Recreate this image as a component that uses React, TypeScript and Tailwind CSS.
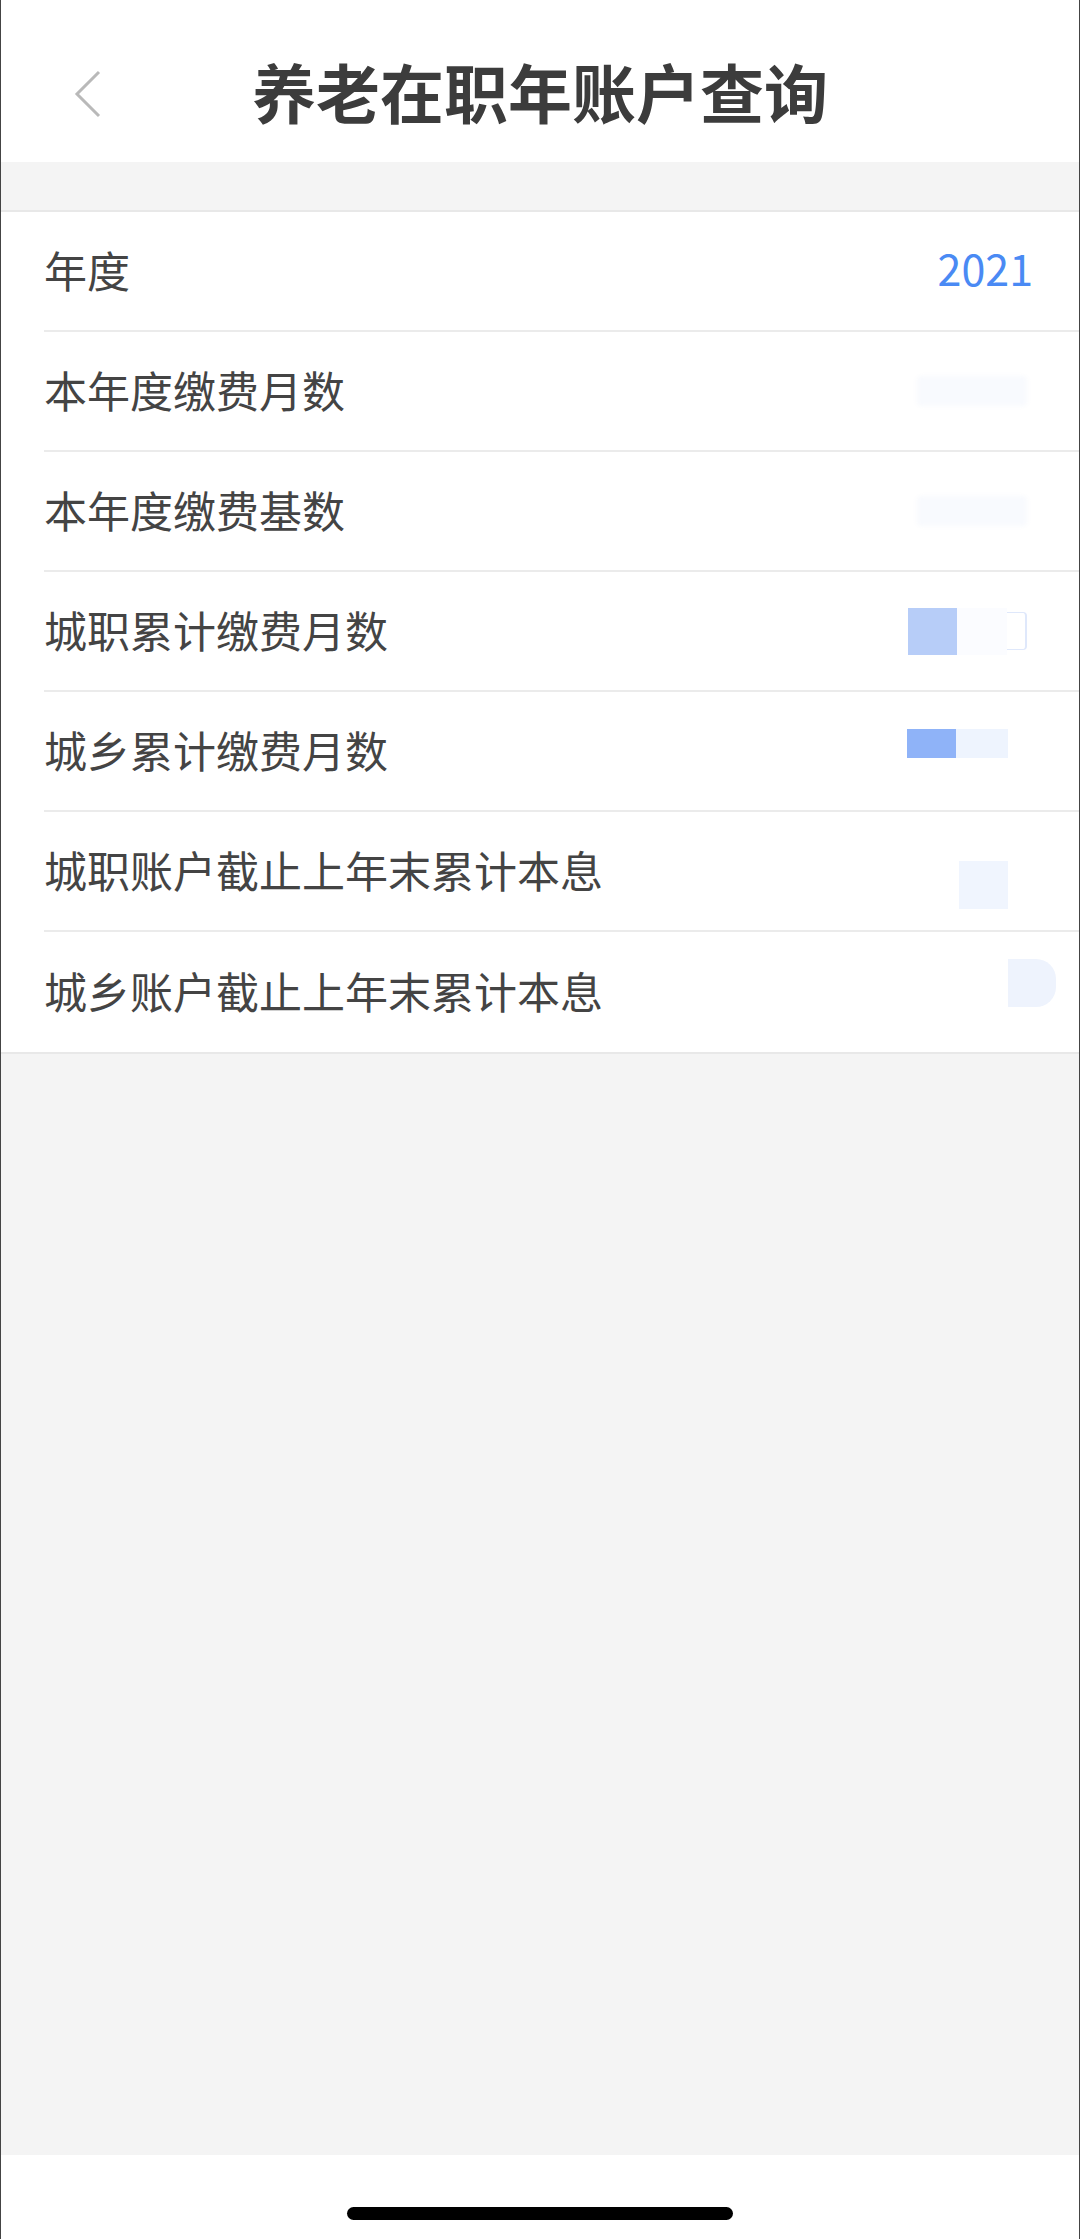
import React from "react";

const font = { fontFamily: '"Noto Sans CJK SC", "Noto Sans", sans-serif' };

type Row = { label: string; value: React.ReactNode };

function Masked({ kind }: { kind: number }) {
  if (kind === 2)
    return (
      <div className="mt-[36px] flex items-start">
        <div className="h-[47px] w-[49px] bg-[#b7cdf8]" />
        <div className="h-[47px] w-[50px] bg-[#fbfcff]" />
        <div className="mt-[4px] h-[38px] w-[20px] rounded-r-sm border-y border-r-2 border-[#dfe8fb]" />
        <div className="w-[52px]" />
      </div>
    );
  if (kind === 3)
    return (
      <div className="mt-[37px] flex items-start">
        <div className="h-[29px] w-[49px] bg-[#8fb3f8]" />
        <div className="h-[29px] w-[52px] bg-[#eef4fe]" />
        <div className="w-[71px]" />
      </div>
    );
  if (kind === 4)
    return (
      <div className="mt-[49px] flex items-start">
        <div className="h-[48px] w-[49px] bg-[#f0f5fe]" />
        <div className="w-[71px]" />
      </div>
    );
  if (kind === 5)
    return (
      <div className="mt-[27px] flex items-start">
        <div className="h-[48px] w-[48px] rounded-r-[20px] bg-[#eef3fd]" />
        <div className="w-[23px]" />
      </div>
    );
  return (
    <div className="mt-[44px] flex items-start">
      <div className="h-[30px] w-[110px] rounded-sm bg-[#f8fafe] blur-[2px]" />
      <div className="w-[52px]" />
    </div>
  );
}

const rows: Row[] = [
  {
    label: "年度",
    value: (
      <span className="mr-[46px] -mt-[8px] self-center text-[43px] leading-none text-[#4a8af4]">2021</span>
    ),
  },
  { label: "本年度缴费月数", value: <Masked kind={1} /> },
  { label: "本年度缴费基数", value: <Masked kind={1} /> },
  { label: "城职累计缴费月数", value: <Masked kind={2} /> },
  { label: "城乡累计缴费月数", value: <Masked kind={3} /> },
  { label: "城职账户截止上年末累计本息", value: <Masked kind={4} /> },
  { label: "城乡账户截止上年末累计本息", value: <Masked kind={5} /> },
];

export default function App() {
  return (
    <div
      className="flex h-[2239px] w-[1080px] flex-col overflow-hidden border-x border-[#444] bg-[#f4f4f4]"
      style={font}
    >
      <header className="relative flex h-[162px] shrink-0 items-center justify-center bg-white">
        <svg
          className="absolute left-[72px] top-[70px]"
          width="30"
          height="48"
          viewBox="0 0 30 48"
          fill="none"
        >
          <path d="M26 2 L4 24 L26 46" stroke="#b9b9b9" strokeWidth="3" strokeLinejoin="miter" />
        </svg>
        <h1 className="mt-[18px] text-[64px] font-bold leading-none text-[#3c3c3c]">养老在职年账户查询</h1>
      </header>
      <div className="h-[48px] shrink-0" />
      <section className="shrink-0 border-y-2 border-[#e8e8e8] bg-white">
        {rows.map((r, i) => (
          <div key={r.label} className="pl-[43px]">
            <div
              className={
                "flex h-[120px] items-stretch justify-between " +
                (i < rows.length - 1 ? "border-b-2 border-[#ebebeb]" : "")
              }
            >
              <span className="-mt-[4px] self-center text-[43px] leading-none text-[#444]">{r.label}</span>
              <div className="flex items-start justify-end">{r.value}</div>
            </div>
          </div>
        ))}
      </section>
      <div className="flex-1" />
      <footer className="flex h-[84px] shrink-0 items-start justify-center bg-white pt-[52px]">
        <div className="h-[13px] w-[386px] rounded-full bg-black" />
      </footer>
    </div>
  );
}
